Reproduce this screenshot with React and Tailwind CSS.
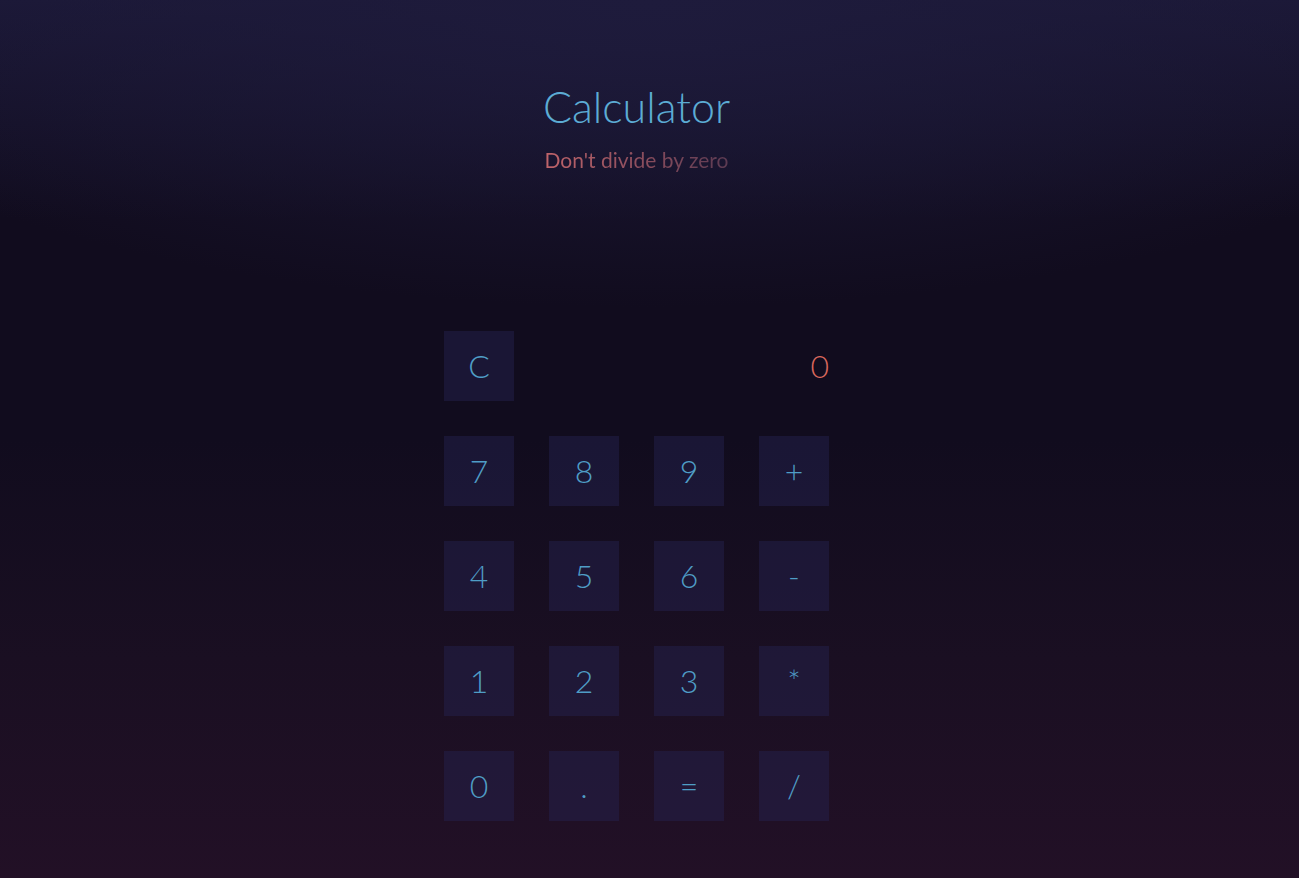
import React, { useState } from "react";

const keys = ["7", "8", "9", "+", "4", "5", "6", "-", "1", "2", "3", "*", "0", ".", "=", "/"];

const Key = ({ label, onClick }) => (
  <button
    onClick={onClick}
    className="w-[70px] h-[70px] bg-[#262352]/45 text-[#4f9dc6] text-[32px] font-light flex items-center justify-center"
  >
    {label}
  </button>
);

export default function App() {
  const [display, setDisplay] = useState("0");

  const press = (k) => {
    if (k === "=") {
      try {
        // eslint-disable-next-line no-new-func
        setDisplay(String(Function(`return (${display})`)()));
      } catch {
        setDisplay("0");
      }
      return;
    }
    setDisplay((d) => (d === "0" ? k : d + k));
  };

  return (
    <div
      className="min-h-[878px] w-full pr-[26px] flex flex-col items-center bg-[radial-gradient(ellipse_70%_35%_at_50%_0%,#1e1b3c_0%,rgba(30,27,60,0)_100%),linear-gradient(180deg,#1b1836_0%,#151128_14%,#110c1e_25%,#110c1e_50%,#1a0f22_75%,#221026_100%)]"
      style={{ fontFamily: "Lato, 'Open Sans', sans-serif" }}
    >
      {/* Heading */}
      <div className="mt-[80px] flex flex-col items-center">
        <h1 className="text-[43px] leading-[54px] font-light text-[#5cacd4]">Calculator</h1>
        <p className="mt-[13px] text-[21px] leading-[26px] bg-[linear-gradient(90deg,#c0646a,#5b3a52)] bg-clip-text text-transparent">
          Don't divide by zero
        </p>
      </div>

      {/* Keypad */}
      <div className="mt-[158px] grid grid-cols-[repeat(4,70px)] gap-[35px]">
        <Key label="C" onClick={() => setDisplay("0")} />
        <div className="col-span-3 flex items-center justify-end text-[32px] font-light text-[#d8675c]">
          {display}
        </div>
        {keys.map((k) => (
          <Key key={k} label={k} onClick={() => press(k)} />
        ))}
      </div>
    </div>
  );
}
